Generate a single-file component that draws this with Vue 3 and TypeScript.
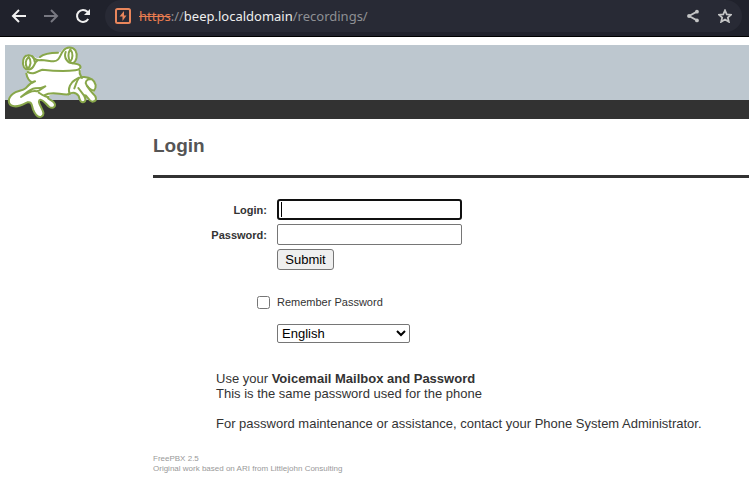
<script setup lang="ts">
import { onMounted, ref } from 'vue'

const login = ref('')
const password = ref('')
const remember = ref(false)
const language = ref('English')
const languages: string[] = ['English', 'Spanish', 'French', 'German', 'Italian']
const loginField = ref<HTMLInputElement | null>(null)

onMounted(() => loginField.value?.focus())
</script>

<template>
  <div class="browser">
    <nav class="toolbar" aria-label="Browser">
      <button class="tool" type="button" aria-label="Back">
        <svg viewBox="0 0 16 16"><path d="M15 8H2M8 2L2 8l6 6" /></svg>
      </button>
      <button class="tool muted" type="button" aria-label="Forward">
        <svg viewBox="0 0 16 16"><path d="M1 8h13M8 2l6 6-6 6" /></svg>
      </button>
      <button class="tool" type="button" aria-label="Reload">
        <svg viewBox="0 0 16 16"><path d="M13.2 11A6 6 0 1 1 12.4 3.8L14 5.5" /><path class="solid" d="M15 1v6H9z" /></svg>
      </button>
      <div class="address">
        <svg class="badge" viewBox="0 0 16 16">
          <rect x="1" y="1" width="14" height="14" rx="1.5" />
          <path class="bolt" d="M9 3L4.500 8.500H7.500V13l4-5.500H9z" />
        </svg>
        <span class="url"><span class="scheme">https</span>://<span class="host">beep.localdomain</span>/recordings/</span>
        <button class="tool small" type="button" aria-label="Share">
          <svg viewBox="0 0 16 16">
            <path class="thin" d="M12.500 3L3.500 8l9 5" />
            <circle cx="12.500" cy="3" r="2.200" /><circle cx="3.500" cy="8" r="2.200" /><circle cx="12.500" cy="13" r="2.200" />
          </svg>
        </button>
        <button class="tool small" type="button" aria-label="Bookmark">
          <svg viewBox="0 0 16 16"><path class="star" d="M8 1.500l2 4.600 5 .4-3.800 3.300 1.200 4.900L8 12.100l-4.400 2.600 1.200-4.900L1 6.500l5-.4z" /></svg>
        </button>
      </div>
    </nav>

    <header class="banner">
      <svg class="frog" viewBox="15 21 285 222" role="img" aria-label="Frog logo">
        <path class="skin" d="M80 103C82 118 88 128 98 134C82 139 86 146 77 151C66 160 51 157 38 168C23 180 22 200 39 204C54 208 66 201 82 193C96 190 95 202 99 214C105 229 112 240 124 236C136 230 128 217 123 207C118 198 113 188 121 185C131 186 139 200 148 207C157 213 168 207 164 197C159 186 145 187 142 177C158 161 180 169 205 170C216 163 231 165 237 176C240 184 238 192 248 193C259 194 257 182 255 174C265 173 265 189 278 191C292 192 290 178 283 170C277 163 281 161 286 151C289 139 286 127 275 122C264 117 255 115 244 121C239 113 242 107 241 98C247 84 237 78 222 73C232 63 234 37 218 29C204 24 188 29 182 43C160 41 132 45 118 60C111 62 104 56 96 53C80 46 66 60 68 75C69 91 77 97 83 97Z" />
        <g class="outline">
          <path d="M104 71C103 57 93 50 83 52C68 54 66 78 72 88C79 99 96 96 102 82C106 76 105 72 112 68" />
          <path d="M86 57C76 65 74 81 83 92C93 84 95 67 86 57" />
          <path d="M97 55C103 64 112 68 124 66C138 66 148 70 161 70C180 69 179 51 190 38C199 25 217 26 226 37C234 51 230 70 218 76C204 76 190 60 197 42" />
          <path d="M211 34C203 45 204 62 211 70C219 62 220 45 211 34" />
          <path d="M120 57C129 49 145 44 174 44" />
          <path d="M83 102C103 113 110 99 127 95C160 99 193 101 226 97C241 96 245 87 238 81C233 77 225 77 218 76" />
          <path d="M79 107C81 119 87 129 98 134M105 130C91 134 86 141 77 151C66 160 51 157 38 168C23 180 22 200 39 204C54 208 66 201 82 193C96 190 95 202 99 214C105 229 112 240 124 236C136 230 128 217 123 207C118 198 113 188 121 185C131 186 139 200 148 207C157 213 168 207 164 197C159 186 145 187 142 177" />
          <path d="M63 177C80 163 91 152 106 151C118 151 126 150 136 145C125 150 121 159 110 160C99 157 79 166 63 177Z" />
          <path d="M116 164C129 171 134 178 145 177M132 172C157 158 180 171 204 169" />
          <path d="M239 98C237 108 242 112 246 120M209 168C202 151 213 132 225 126C242 111 265 117 276 124C289 133 290 149 282 158C273 157 260 147 257 135C258 125 267 122 275 124" />
          <path d="M205 169C217 162 229 164 236 174C239 181 238 193 249 193C260 191 257 179 250 170L235 150M251 171C264 169 263 189 277 191C295 189 287 174 280 168C271 158 266 151 262 145M236 122C228 130 228 141 223 151" />
        </g>
      </svg>
    </header>

    <main class="content">
      <h1>Login</h1>
      <form class="login-form" @submit.prevent>
        <label class="name" for="login">Login:</label>
        <input id="login" ref="loginField" v-model="login" class="field" type="text" placeholder=" " autofocus />
        <label class="name" for="password">Password:</label>
        <input id="password" v-model="password" class="field" type="password" placeholder=" " />
        <button class="submit" type="submit">Submit</button>
        <input id="remember" v-model="remember" class="check" type="checkbox" />
        <label class="remember" for="remember">Remember Password</label>
        <select v-model="language" class="language" aria-label="Language">
          <option v-for="item in languages" :key="item">{{ item }}</option>
        </select>
      </form>
      <div class="help">
        <p>Use your <b>Voicemail Mailbox and Password</b><br />This is the same password used for the phone</p>
        <p>For password maintenance or assistance, contact your Phone System Administrator.</p>
      </div>
      <footer>FreePBX 2.5<br />Original work based on ARI from Littlejohn Consulting</footer>
    </main>
  </div>
</template>

<style>
body {
  background: #fff;
  overflow-x: hidden;
}
</style>

<style scoped>
.browser {
  color: #333;
  font-family: "Liberation Sans", Arial, sans-serif;
}
.toolbar {
  display: flex;
  align-items: center;
  gap: 16px;
  height: 32px;
  padding: 0 7px 4px 11px;
  background: #20222c;
  border-bottom: 1px solid #000;
}
.tool {
  display: flex;
  flex: none;
  width: 16px;
  height: 16px;
  padding: 0;
  border: 0;
  background: none;
  color: #f0f0f0;
}
.muted {
  color: #777881;
}
.tool svg {
  width: 16px;
  height: 16px;
  fill: none;
  stroke: currentColor;
  stroke-width: 2;
}
.tool .solid {
  fill: currentColor;
  stroke: none;
}
.tool.small {
  width: 14px;
  height: 14px;
  color: #c3c4c5;
}
.tool.small svg {
  width: 14px;
  height: 14px;
}
.tool.small circle {
  fill: currentColor;
  stroke: none;
}
.address {
  display: flex;
  flex: 1;
  align-items: center;
  gap: 18px;
  height: 32px;
  margin-left: -2px;
  padding: 0 10px;
  border-radius: 16px;
  background: #282a35;
}
.badge {
  flex: none;
  width: 16px;
  height: 16px;
  margin-right: -10px;
  fill: none;
  stroke: #e9865c;
  stroke-width: 2;
}
.badge .bolt {
  fill: #e9865c;
  stroke: none;
}
.url {
  flex: 1;
  color: #8e9094;
  font: 13px/20px "Noto Sans", sans-serif;
  white-space: nowrap;
}
.scheme {
  color: #e97d50;
  text-decoration: line-through;
}
.host {
  color: #eee;
}
.banner {
  height: 55px;
  margin: 8px 0 0 5px;
  border-bottom: 19px solid #323232;
  background: #bdc7cf;
}
.frog {
  display: block;
  width: 95px;
  height: 74px;
}
.skin {
  fill: #fff;
}
.outline {
  fill: none;
  stroke: #88a74a;
  stroke-width: 6;
  stroke-linecap: round;
  stroke-linejoin: round;
}
.content {
  padding: 16px 0 0 153px;
}
h1 {
  margin: 0;
  padding-bottom: 18px;
  border-bottom: 3px solid #323232;
  color: #555;
  font-size: 19px;
  line-height: 22px;
}
.login-form {
  display: grid;
  grid-template-columns: 114px 185px;
  gap: 4px 10px;
  align-items: center;
  padding-top: 21px;
  font-size: 11px;
}
.name {
  text-align: right;
  font-weight: bold;
}
.field {
  width: 185px;
  height: 21px;
  margin: 0;
  padding: 1px 2px;
  box-sizing: border-box;
  border: 1px solid #767676;
  border-radius: 2px;
  background: #fff;
  color: #000;
  font: 13px "Liberation Sans", Arial, sans-serif;
}
.field:focus {
  padding: 0 2px;
  border: 2px solid #101010;
  border-radius: 3px;
  outline: 0;
}
/* Steady caret while the focused field is empty */
.field:focus:placeholder-shown {
  background: linear-gradient(#000, #000) 2px 50% / 1px 15px no-repeat #fff;
  caret-color: transparent;
}
.submit {
  grid-column: 2;
  justify-self: start;
  width: 57px;
  height: 21px;
  padding: 0;
  border: 1px solid #767676;
  border-radius: 3px;
  background: #efefef;
  color: #000;
  font: 13px "Liberation Sans", Arial, sans-serif;
}
.check {
  justify-self: end;
  width: 13px;
  height: 13px;
  margin: 22px -3px 0 0;
}
.remember {
  margin-top: 20px;
}
.language {
  grid-column: 2;
  width: 133px;
  height: 19px;
  margin-top: 11px;
  border: 1px solid #767676;
  border-radius: 2px;
  background-color: #fff;
  color: #000;
  font: 13px "Liberation Sans", Arial, sans-serif;
}
.help {
  padding: 28px 0 0 63px;
  font-size: 13px;
  line-height: 15px;
}
p {
  margin: 0 0 15px;
}
footer {
  padding-top: 8px;
  color: #999;
  font-size: 8px;
  line-height: 10px;
}
</style>
